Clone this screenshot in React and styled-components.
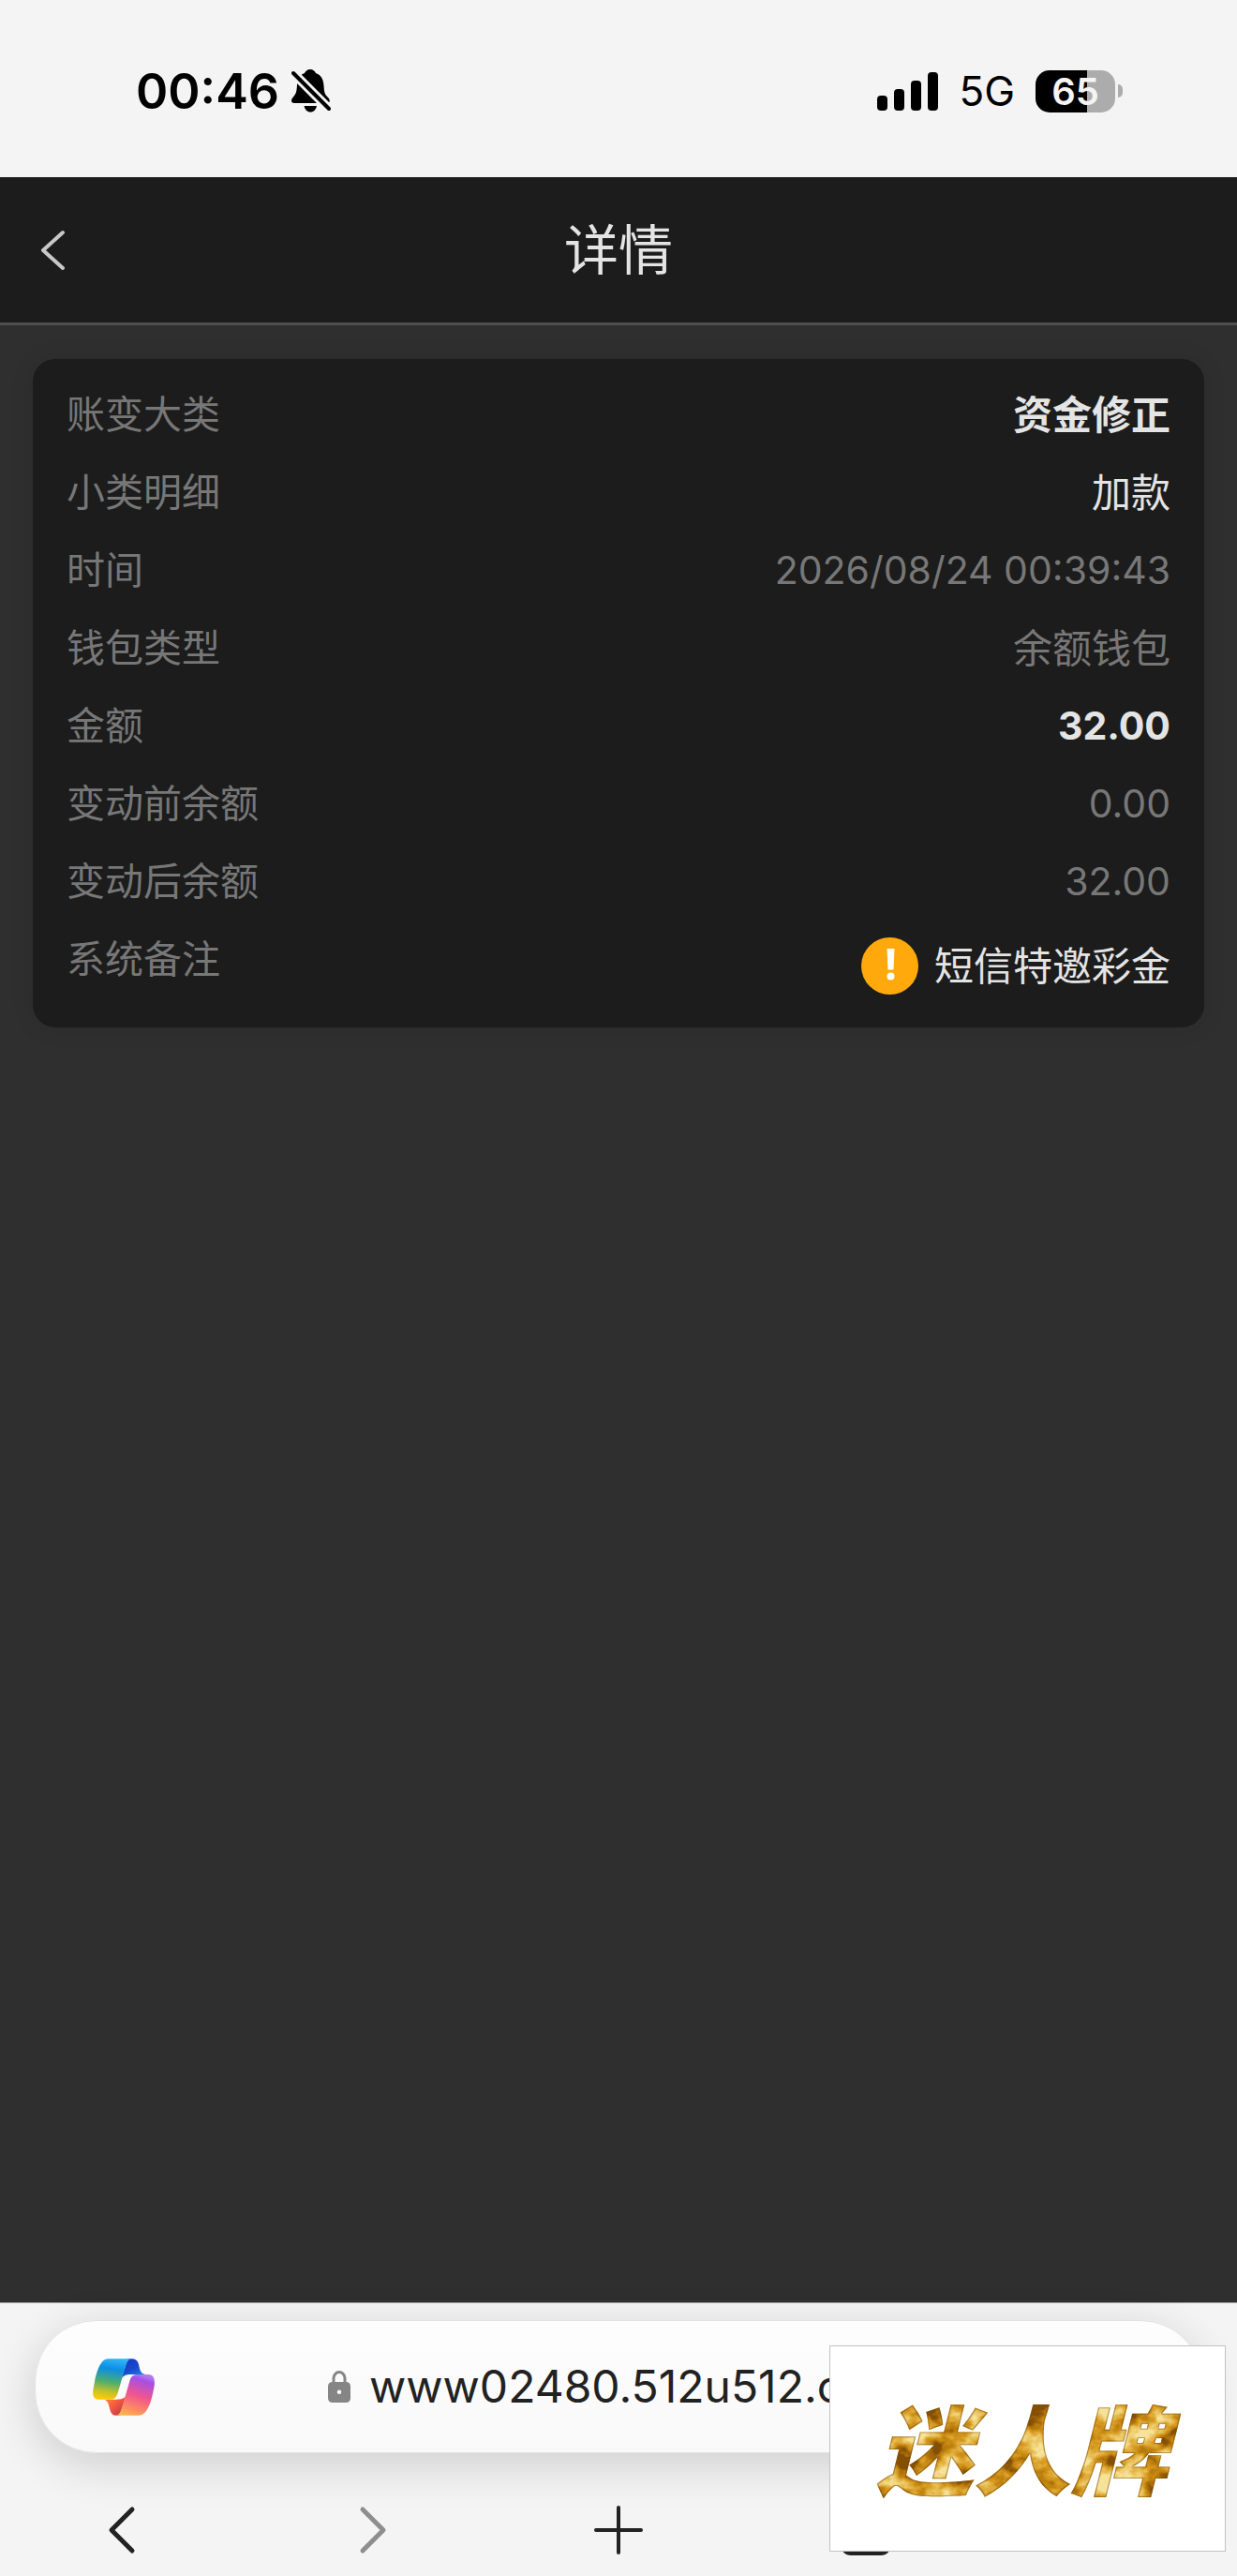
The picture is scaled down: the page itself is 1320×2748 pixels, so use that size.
import React from "react";
import styled, { createGlobalStyle } from "styled-components";

const details = [
  { label: "账变大类", value: "资金修正", tone: "bright", bold: true },
  { label: "小类明细", value: "加款", tone: "bright" },
  { label: "时间", value: "2026/08/24 00:39:43", numeric: true },
  { label: "钱包类型", value: "余额钱包" },
  { label: "金额", value: "32.00", tone: "bright", bold: true, numeric: true },
  { label: "变动前余额", value: "0.00", numeric: true },
  { label: "变动后余额", value: "32.00", numeric: true },
  { label: "系统备注", value: "短信特邀彩金", tone: "bright", notice: true },
];

const BellOff = () => (
  <svg width="42" height="46" viewBox="0 0 42 46" aria-hidden="true">
    <path
      d="M20 0C23 0 25 2 26 4C32 6 34 11 34.500 17C35 24 35 26 39 30C41 32 42 36 38 36H3C-1 36 -.5 32 1.500 30C5 26 5.500 24 6 17C6.500 11 8 6 14 4C15 2 17 0 20 0Z"
      fill="#000"
    />
    <path d="M13.500 39H27C26 43 24 45.500 20.300 45.500S14.500 43 13.500 39Z" fill="#000" />
    <path d="M0 2L42 44" stroke="#f4f4f4" strokeWidth="10" />
    <path d="M2 4L40 42" stroke="#000" strokeWidth="4" strokeLinecap="round" />
  </svg>
);

const Signal = () => (
  <svg width="65" height="41" viewBox="0 0 65 41" aria-hidden="true">
    <rect x="0" y="25" width="11" height="16" rx="4" />
    <rect x="18" y="18" width="11" height="23" rx="4" />
    <rect x="36" y="9" width="11" height="32" rx="4" />
    <rect x="54" y="0" width="11" height="41" rx="4" />
  </svg>
);

const Chevron = ({ flip }) => (
  <svg width="34" height="52" viewBox="0 0 34 52" fill="none" aria-hidden="true">
    <path
      d={flip ? "M8 4L30 26L8 48" : "M26 4L4 26L26 48"}
      stroke="currentColor"
      strokeWidth="5"
      strokeLinecap="round"
      strokeLinejoin="round"
    />
  </svg>
);

const Copilot = () => (
  <svg width="66" height="61" viewBox="0 0 198 183" aria-hidden="true">
    <defs>
      <linearGradient id="sky" x1="0.550" y1="0" x2="0.400" y2="1">
        <stop offset="0" stopColor="#2fb4f6" />
        <stop offset="0.250" stopColor="#0c8ee4" />
        <stop offset="0.580" stopColor="#4fae6c" />
        <stop offset="0.820" stopColor="#c3c129" />
        <stop offset="1" stopColor="#ffcb05" />
      </linearGradient>
      <linearGradient id="deep" x1="0.200" y1="0" x2="0.800" y2="1">
        <stop offset="0" stopColor="#0d3cc4" />
        <stop offset="0.500" stopColor="#1c48cc" />
        <stop offset="1" stopColor="#1590ee" />
      </linearGradient>
      <linearGradient id="rose" x1="0.650" y1="0" x2="0.350" y2="1">
        <stop offset="0" stopColor="#b07af0" />
        <stop offset="0.120" stopColor="#a650e4" />
        <stop offset="0.500" stopColor="#f0568e" />
        <stop offset="0.820" stopColor="#fd8a62" />
        <stop offset="1" stopColor="#ffb04e" />
      </linearGradient>
      <linearGradient id="ember" x1="0" y1="0" x2="0.900" y2="0.800">
        <stop offset="0" stopColor="#ff9b4a" />
        <stop offset="0.500" stopColor="#fb5f3c" />
        <stop offset="1" stopColor="#c43a4c" />
      </linearGradient>
    </defs>
    <path
      d="M112 1H126C141 1 146 12 149 28C152 42 156 49 168 51H122C106 51 98 55 92 64Z"
      fill="url(#deep)"
    />
    <path
      d="M86 182H74C59 182 56 168 52 152C49 140 45 133 34 131H76C94 131 102 127 107 117Z"
      fill="url(#ember)"
    />
    <path
      d="M50 1H126C114 1 109 12 104 28L81 107C77 122 70 131 56 131H20C1 131 -2 116 2 95C9 56 20 1 50 1Z"
      fill="url(#sky)"
    />
    <path
      d="M148 182H72C84 182 89 171 94 155L117 76C121 60 128 51 142 51H177C195 51 200 66 197 88C190 127 178 182 148 182Z"
      fill="url(#rose)"
    />
  </svg>
);

const Lock = () => (
  <svg width="24" height="34" viewBox="0 0 24 34" aria-hidden="true">
    <path d="M6 14V8A6 6.500 0 0 1 18 8V14" fill="none" stroke="#858585" strokeWidth="3" />
    <path
      fillRule="evenodd"
      d="M5 12H19Q24 12 24 17V29Q24 34 19 34H5Q0 34 0 29V17Q0 12 5 12ZM12 20.500A2.300 2.300 0 1 0 12 25.100A2.300 2.300 0 1 0 12 20.500Z"
      fill="#858585"
    />
  </svg>
);

const Plus = () => (
  <svg width="52" height="52" viewBox="0 0 52 52" aria-hidden="true">
    <path d="M26 2V50M2 26H50" stroke="currentColor" strokeWidth="4" strokeLinecap="round" />
  </svg>
);

const Tabs = () => (
  <svg width="54" height="54" viewBox="0 0 54 54" fill="none" aria-hidden="true">
    <rect x="2" y="2" width="50" height="50" rx="9" stroke="currentColor" strokeWidth="4" />
  </svg>
);

const Menu = () => (
  <svg width="58" height="48" viewBox="0 0 58 48" aria-hidden="true">
    <path d="M2 4H56M2 24H56M2 45H56" stroke="#c8c8c8" strokeWidth="4" />
  </svg>
);

const Warning = () => (
  <svg width="61" height="61" viewBox="0 0 61 61" role="img" aria-label="提示">
    <circle cx="30.500" cy="30.500" r="30.500" fill="#ffa90c" />
    <path d="M27.500 12H35.500L34.500 34.500H28.500Z" fill="#fff" />
    <circle cx="31.500" cy="41.500" r="4" fill="#fff" />
  </svg>
);

/* gold leaf texture for the stamp lettering */
const GoldFilter = () => (
  <svg width="0" height="0" aria-hidden="true">
    <filter id="gold" x="0" y="0" width="1" height="1" colorInterpolationFilters="sRGB">
      <feTurbulence type="fractalNoise" baseFrequency="0.03 0.04" numOctaves="4" seed="8" />
      <feColorMatrix values="2.4 0 0 0 -0.65  2.4 0 0 0 -0.65  2.4 0 0 0 -0.65  0 0 0 0 1" />
      <feComponentTransfer result="leaf">
        <feFuncR type="table" tableValues="0.52 0.72 0.84 0.91 0.97" />
        <feFuncG type="table" tableValues="0.31 0.48 0.6 0.75 0.89" />
        <feFuncB type="table" tableValues="0.02 0.05 0.12 0.34 0.6" />
      </feComponentTransfer>
      <feComposite in="leaf" in2="SourceAlpha" operator="in" result="fill" />
      <feMorphology in="SourceAlpha" operator="erode" radius="1" result="inner" />
      <feComposite in="SourceAlpha" in2="inner" operator="out" result="rim" />
      <feFlood floodColor="#7a4a08" floodOpacity="0.5" />
      <feComposite in2="rim" operator="in" result="edge" />
      <feMerge>
        <feMergeNode in="fill" />
        <feMergeNode in="edge" />
      </feMerge>
    </filter>
  </svg>
);

const App = () => {
  return (
    <Page>
      <GlobalStyle />

      <StatusBar>
        <StatusGroup>
          <Clock>00:46</Clock>
          <BellOff />
        </StatusGroup>
        <StatusGroup $wide>
          <Signal />
          <Network>5G</Network>
          <Battery>
            <BatteryBody>65</BatteryBody>
            <BatteryTip />
          </Battery>
        </StatusGroup>
      </StatusBar>

      <Header>
        <BackButton type="button" aria-label="返回">
          <svg width="28" height="44" viewBox="0 0 28 44" fill="none">
            <path
              d="M25 3L4 22L25 41"
              stroke="#c8c8c8"
              strokeWidth="4"
              strokeLinecap="round"
              strokeLinejoin="round"
            />
          </svg>
        </BackButton>
        <Title>详情</Title>
      </Header>

      <Main>
        <Card>
          {details.map((item) => (
            <Row key={item.label}>
              <Label>{item.label}</Label>
              <Value
                $tone={item.tone}
                $bold={item.bold}
                $numeric={item.numeric}
                $notice={item.notice}
              >
                {item.notice && <Warning />}
                {item.value}
              </Value>
            </Row>
          ))}
        </Card>
      </Main>

      <Browser>
        <AddressBar>
          <IconButton type="button" aria-label="Copilot">
            <Copilot />
          </IconButton>
          <Address type="button">
            <Lock />
            www02480.512u512.com
          </Address>
        </AddressBar>
        <Toolbar>
          <ToolButton type="button" aria-label="后退">
            <Chevron />
          </ToolButton>
          <ToolButton type="button" aria-label="前进" $muted>
            <Chevron flip />
          </ToolButton>
          <ToolButton type="button" aria-label="新建标签页">
            <Plus />
          </ToolButton>
          <ToolButton type="button" aria-label="标签页">
            <Tabs />
          </ToolButton>
          <ToolButton type="button" aria-label="菜单">
            <Menu />
          </ToolButton>
        </Toolbar>
        <Stamp>
          <GoldFilter />
          <StampText>迷人牌</StampText>
        </Stamp>
      </Browser>
    </Page>
  );
};

export default App;

const GlobalStyle = createGlobalStyle`
  * {
    box-sizing: border-box;
    margin: 0;
    padding: 0;
  }

  body {
    background: #2f2f2f;
    font-family: Inter, "Noto Sans CJK SC", sans-serif;
  }

  button {
    border: none;
    background: none;
    font: inherit;
    color: inherit;
    cursor: pointer;
  }

  svg {
    display: block;
    flex-shrink: 0;
  }
`;

const Page = styled.div`
  display: flex;
  flex-direction: column;
  min-height: 100vh;
`;

const StatusBar = styled.div`
  display: flex;
  justify-content: space-between;
  align-items: center;
  height: 189px;
  padding: 5px 122px 0 145px;
  background: #f4f4f4;
  color: #000;
`;

const StatusGroup = styled.div`
  display: flex;
  align-items: center;
  gap: ${({ $wide }) => ($wide ? "22px" : "13px")};
`;

const Clock = styled.span`
  font-size: 52px;
  font-weight: 600;
`;

const Network = styled.span`
  font-size: 44px;
`;

const Battery = styled.div`
  display: flex;
  align-items: center;
  gap: 3px;
`;

const BatteryBody = styled.span`
  display: flex;
  align-items: center;
  justify-content: center;
  width: 85px;
  height: 45px;
  border-radius: 15px;
  background: linear-gradient(90deg, #000 65%, #acacac 65%);
  color: #f4f4f4;
  font-size: 40px;
  font-weight: 600;
`;

const BatteryTip = styled.span`
  width: 5px;
  height: 14px;
  border-radius: 0 7px 7px 0;
  background: #acacac;
`;

const Header = styled.header`
  display: grid;
  grid-template-columns: 1fr auto 1fr;
  align-items: center;
  height: 158px;
  padding: 0 42px;
  background: #1c1c1c;
  border-bottom: 3px solid #4f4f4f;
`;

const BackButton = styled.button`
  justify-self: start;
`;

const Title = styled.h1`
  font-size: 58px;
  font-weight: 400;
  line-height: 84px;
  color: #e4e4e4;
`;

const Main = styled.main`
  flex: 1;
  padding: 36px 35px;
  background: #2f2f2f;
`;

const Card = styled.dl`
  padding: 18px 36px;
  border-radius: 24px;
  background: #1c1c1c;
  box-shadow: 0 0 24px rgba(0, 0, 0, 0.1);
`;

const Row = styled.div`
  display: flex;
  justify-content: space-between;
  font-size: 42px;
  line-height: 83px;
`;

const Label = styled.dt`
  font-size: 41px;
  color: #777;
`;

const Value = styled.dd`
  display: flex;
  align-items: center;
  gap: 17px;
  min-height: ${({ $notice }) => ($notice ? "96px" : "83px")};
  color: ${({ $tone }) => ($tone === "bright" ? "#e4e4e4" : "#777")};
  font-size: ${({ $numeric }) => ($numeric ? "41px" : "42px")};
  font-weight: ${({ $bold }) => ($bold ? 700 : 400)};
`;

const Browser = styled.footer`
  position: relative;
  height: 292px;
  padding: 18px 37px 0;
  border-top: 1px solid #a0a0a0;
  background: #f4f4f4;
  color: #222;
`;

const AddressBar = styled.div`
  display: grid;
  grid-template-columns: 127px 1fr 127px;
  align-items: center;
  height: 142px;
  border: 1px solid #e2e2e2;
  border-radius: 66px;
  background: linear-gradient(#fdfdfd, #f9f9f9);
  box-shadow: 0 12px 48px rgba(0, 0, 0, 0.16);
`;

const IconButton = styled.button`
  justify-self: end;
`;

const Address = styled.button`
  display: flex;
  align-items: center;
  justify-content: center;
  gap: 20px;
  font-size: 48px;
  line-height: 64px;
`;

const Toolbar = styled.nav`
  display: grid;
  grid-template-columns: repeat(5, 1fr);
  align-items: center;
  height: 96px;
  margin: 34px -37px 0;
`;

const ToolButton = styled.button`
  display: flex;
  justify-content: center;
  color: ${({ $muted }) => ($muted ? "#8e8e8e" : "#222")};
`;

/* sits over the right end of the browser bar */
const Stamp = styled.div`
  position: absolute;
  right: 12px;
  bottom: 26px;
  display: flex;
  align-items: center;
  justify-content: center;
  width: 423px;
  height: 220px;
  padding-bottom: 6px;
  border: 1px solid #c2c2c2;
  background: #fff;
`;

const StampText = styled.span`
  padding: 0 24px 0 12px;
  font-family: "Noto Sans CJK SC", sans-serif;
  font-size: 104px;
  font-style: italic;
  font-weight: 900;
  line-height: 150px;
  color: #d8a63a;
  filter: url(#gold);
`;
